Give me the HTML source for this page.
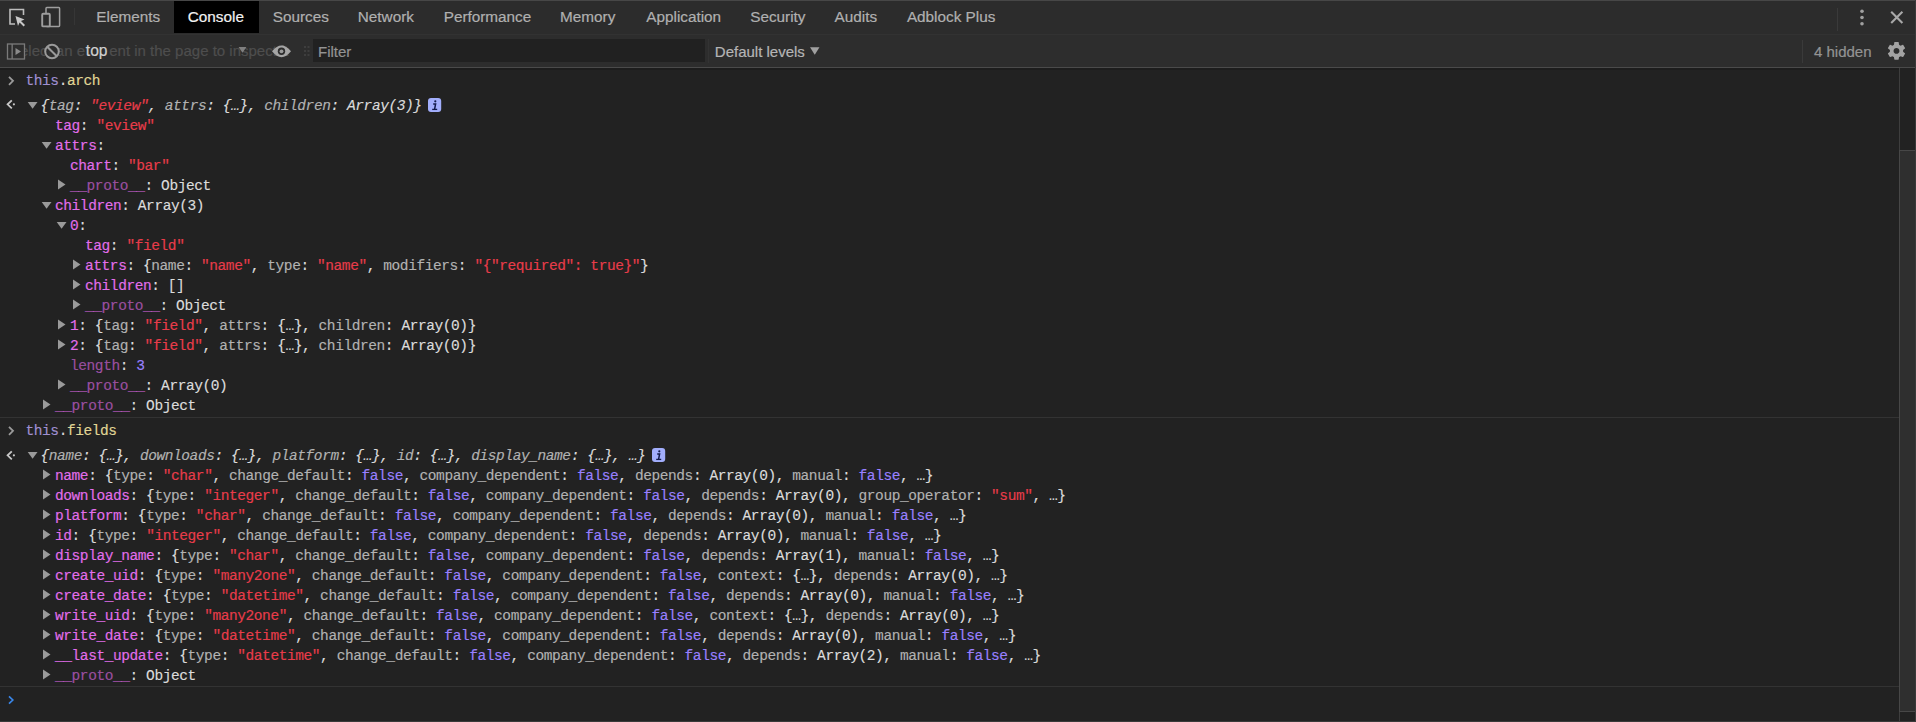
<!DOCTYPE html>
<html><head><meta charset="utf-8">
<style>
*{margin:0;padding:0;box-sizing:border-box}
html,body{width:1916px;height:722px;overflow:hidden;background:#222}
body{position:relative;font-family:"Liberation Sans",sans-serif}
.abs{position:absolute}
#topline{position:absolute;left:0;top:0;width:1916px;height:1px;background:#474747}
#tabbar{position:absolute;left:0;top:1px;width:1916px;height:34px;background:#2c2c2c;border-bottom:1px solid #323232}
#toolbar{position:absolute;left:0;top:35px;width:1916px;height:33px;background:#2d2d2d;border-bottom:1px solid #4a4a4a}
.tab{position:absolute;top:0;height:33px;line-height:33px;font-size:15.3px;color:#b0b0b0;white-space:pre;-webkit-text-stroke:0.2px currentColor}
#seltab{position:absolute;left:174px;top:1px;width:85px;height:32px;background:#000}
.tb{position:absolute;font-size:15px;white-space:pre;line-height:18px;-webkit-text-stroke:0.2px currentColor}
.row{position:absolute;font-family:"Liberation Mono",monospace;font-size:14.5px;letter-spacing:-0.42px;-webkit-text-stroke:0.15px currentColor;line-height:20px;height:20px;white-space:pre;color:#dcdcdc}
.row.it{font-style:italic}
.n{color:#e36eec}
.nd{color:rgba(227,110,236,0.6)}
.s{color:#e93c4a}
.b{color:#9980ff}
.p{color:#b2b2b2}
.tri{position:absolute;width:0;height:0}
.tri.r{border-left:7.5px solid #9a9a9a;border-top:4.75px solid transparent;border-bottom:4.75px solid transparent;margin-left:-12px;margin-top:3px}
.tri.d{border-top:7px solid #9a9a9a;border-left:4.7px solid transparent;border-right:4.7px solid transparent;margin-left:-13px;margin-top:5.67px}
.badge{position:absolute;width:14px;height:14px;border-radius:3px;background:#8f9cf6;color:#0a1a50;font-family:"Liberation Serif",serif;font-size:12px;line-height:14px;text-align:center}
.badge i{font-weight:bold}
.sep{position:absolute;left:0;width:1899px;height:1px;background:#333}
#scrolltrack{position:absolute;left:1899px;top:68px;width:17px;height:653px;background:#222;border-left:1px solid #3e3e3e;border-right:1px solid #444}
#thumb{position:absolute;left:1899px;top:150px;width:17px;height:562px;background:#2f2f2f;border:1px solid #474747}
#botline{position:absolute;left:0;top:721px;width:1916px;height:1px;background:#3a3a3a}
</style></head><body>
<div id="topline"></div>
<div id="tabbar"></div>
<div id="seltab"></div>
<!-- tab bar icons -->
<svg class="abs" style="left:0;top:0" width="80" height="34" viewBox="0 0 80 34">
  <path d="M15 24 H10 V9.5 H23.5 V15" fill="none" stroke="#bdbdbd" stroke-width="1.6"/>
  <path d="M15.5 16 L24.5 19.5 L21 21 L25 25 L23.6 26.4 L19.6 22.4 L18 26 Z" fill="#c8c8c8"/>
  <rect x="46" y="7.6" width="13.6" height="18.8" rx="0.8" fill="none" stroke="#9e9e9e" stroke-width="1.5"/>
  <rect x="42.2" y="13.8" width="7.6" height="12.6" rx="1" fill="#2c2c2c" stroke="#9e9e9e" stroke-width="1.9"/>
  <rect x="74" y="8" width="1" height="17" fill="#363636"/>
</svg>
<div class="tab" style="left:96.3px;top:0.25px">Elements</div>
<div class="tab" style="left:187.8px;top:0.25px;color:#f2f2f2">Console</div>
<div class="tab" style="left:272.8px;top:0.25px">Sources</div>
<div class="tab" style="left:357.8px;top:0.25px">Network</div>
<div class="tab" style="left:443.7px;top:0.25px">Performance</div>
<div class="tab" style="left:560.1px;top:0.25px">Memory</div>
<div class="tab" style="left:646.3px;top:0.25px">Application</div>
<div class="tab" style="left:750.2px;top:0.25px">Security</div>
<div class="tab" style="left:834.6px;top:0.25px">Audits</div>
<div class="tab" style="left:906.9px;top:0.25px">Adblock Plus</div>
<svg class="abs" style="left:1830px;top:0" width="86" height="34" viewBox="0 0 86 34">
  <rect x="7" y="8" width="1" height="23" fill="#3a3a3a"/>
  <circle cx="32" cy="11.2" r="1.8" fill="#a0a0a0"/>
  <circle cx="32" cy="17.5" r="1.8" fill="#a0a0a0"/>
  <circle cx="32" cy="23.8" r="1.8" fill="#a0a0a0"/>
  <path d="M61.2 11.7 L72.4 22.9 M72.4 11.7 L61.2 22.9" stroke="#a8a8a8" stroke-width="2.1"/>
</svg>
<div id="toolbar"></div>
<!-- toolbar -->
<div class="tb" style="left:10px;top:42.3px;color:#4e4e4e">Select an element in the page to inspect it</div>
<svg class="abs" style="left:0;top:35px" width="320" height="33" viewBox="0 0 320 33">
  <rect x="7.5" y="9" width="17" height="15" fill="#2d2d2d" stroke="#7a7a7a" stroke-width="1.3"/>
  <rect x="11.5" y="9" width="1.3" height="15" fill="#7a7a7a"/>
  <path d="M15.5 13 L21 16.5 L15.5 20 Z" fill="#8a8a8a"/>
  <circle cx="52" cy="16.5" r="6.8" fill="#2d2d2d" fill-opacity="0.8" stroke="#9a9a9a" stroke-width="2"/>
  <path d="M47.2 11.7 L56.8 21.3" stroke="#9a9a9a" stroke-width="2"/>
  <path d="M238.6 12 L246.4 12 L242.5 17.8 Z" fill="#808080"/>
  <path d="M272 16.3 Q281.5 4.6 291 16.3 Q281.5 28 272 16.3 Z" fill="#a5a5a5"/>
  <circle cx="281.5" cy="16.3" r="3.7" fill="#2d2d2d"/>
  <circle cx="281.5" cy="16.3" r="1.9" fill="#9a9a9a"/>
  <g fill="#3e3e3e"><rect x="304" y="11" width="2" height="2"/><rect x="307.5" y="11" width="2" height="2"/><rect x="304" y="15" width="2" height="2"/><rect x="307.5" y="15" width="2" height="2"/><rect x="304" y="19" width="2" height="2"/><rect x="307.5" y="19" width="2" height="2"/></g>
</svg>
<div class="tb" style="left:84.8px;top:42.3px;padding-left:1px;width:24px;height:17px;background:#2d2d2d;color:#d0d0d0;font-size:15.6px">top</div>
<div class="abs" style="left:313px;top:39px;width:392px;height:23px;background:#212121"></div>
<div class="tb" style="left:318px;top:42.8px;color:#939393">Filter</div>
<div class="abs" style="left:708px;top:39px;width:1px;height:24px;background:#333"></div>
<div class="tb" style="left:714.8px;top:42.5px;color:#b5b5b5">Default levels</div>
<svg class="abs" style="left:800px;top:35px" width="30" height="33"><path d="M810 12.3 L819.5 12.3 L814.75 19.7 Z" transform="translate(-800 0)" fill="#a0a0a0"/></svg>
<div class="abs" style="left:1802px;top:40px;width:1px;height:23px;background:#3a3a3a"></div>
<div class="tb" style="left:1814px;top:42.5px;color:#939393">4 hidden</div>
<svg class="abs" style="left:1880px;top:35px" width="36" height="33" viewBox="0 0 36 33">
  <path transform="translate(5.46 4.86) scale(0.92)" fill="#a3a3a3" fill-rule="evenodd" d="M19.14,12.94c0.04-0.3,0.06-0.61,0.06-0.94c0-0.32-0.02-0.64-0.07-0.94l2.03-1.58c0.18-0.14,0.23-0.41,0.12-0.61l-1.92-3.32c-0.12-0.22-0.37-0.29-0.59-0.22l-2.39,0.96c-0.5-0.38-1.03-0.7-1.62-0.94L14.4,2.81c-0.04-0.24-0.24-0.41-0.48-0.41h-3.84c-0.24,0-0.43,0.17-0.47,0.41L9.25,5.35C8.66,5.59,8.12,5.92,7.63,6.29L5.24,5.33c-0.22-0.08-0.47,0-0.59,0.22L2.74,8.87C2.62,9.08,2.66,9.34,2.86,9.48l2.03,1.58C4.84,11.36,4.8,11.69,4.8,12s0.02,0.64,0.07,0.94l-2.03,1.58c-0.18,0.14-0.23,0.41-0.12,0.61l1.92,3.32c0.12,0.22,0.37,0.29,0.59,0.22l2.39-0.96c0.5,0.38,1.03,0.7,1.62,0.94l0.36,2.54c0.05,0.24,0.24,0.41,0.48,0.41h3.84c0.24,0,0.44-0.17,0.47-0.41l0.36-2.54c0.59-0.24,1.13-0.56,1.62-0.94l2.39,0.96c0.22,0.08,0.47,0,0.59-0.22l1.92-3.32c0.12-0.22,0.07-0.47-0.12-0.61L19.14,12.94z M12,15.2c-1.77,0-3.2-1.43-3.2-3.2s1.43-3.2,3.2-3.2s3.2,1.43,3.2,3.2S13.77,15.2,12,15.2z"/>
</svg>
<!-- console -->
<svg class="abs" style="left:0;top:68px" width="40" height="640" viewBox="0 0 40 640">
  <path d="M9 8.8 L13 12.8 L9 16.8" fill="none" stroke="#9a9a9a" stroke-width="1.8"/>
  <path d="M11.8 32.3 L7.6 36.3 L11.8 40.3" fill="none" stroke="#c8c8c8" stroke-width="1.8"/><circle cx="13.9" cy="36.3" r="1.1" fill="#c8c8c8"/>
  <path d="M9 358.8 L13 362.8 L9 366.8" fill="none" stroke="#9a9a9a" stroke-width="1.8"/>
  <path d="M11.8 383.3 L7.6 387.3 L11.8 391.3" fill="none" stroke="#c8c8c8" stroke-width="1.8"/><circle cx="13.9" cy="387.3" r="1.1" fill="#c8c8c8"/>
  <path d="M9 628.3 L12.8 632 L9 635.7" fill="none" stroke="#3a86e8" stroke-width="1.7"/>
</svg>
<div class="row" style="top:71.4px;left:25.5px"><span style="color:#a090d2">this</span>.<span style="color:#e0d696">arch</span></div>
<div class="row" style="top:421.4px;left:25.5px"><span style="color:#a090d2">this</span>.<span style="color:#e0d696">fields</span></div>
<div class="row it" style="top:96.40px;left:40.50px">{<span class="p">tag</span>: <span class="s">"eview"</span>, <span class="p">attrs</span>: {…}, <span class="p">children</span>: Array(3)}</div>
<svg class="abs" style="left:24.50px;top:90.00px" width="20" height="20"><polygon points="2.70,12.00 12.50,12.00 7.60,18.70" fill="#9a9a9a"/></svg>
<svg class="abs" style="top:98.00px;left:428.13px" width="14" height="14" viewBox="0 0 14 14"><rect x="0" y="0" width="13.2" height="14" rx="3" fill="#a2aefc"/><circle cx="7.3" cy="3.3" r="1.1" fill="#121a4a"/><path d="M5.2 6 L7.6 6 L6.6 11.2" fill="none" stroke="#121a4a" stroke-width="1.5"/><path d="M4.2 11.4 L9.2 11.4" stroke="#121a4a" stroke-width="1.3"/></svg>
<div class="row" style="top:116.40px;left:55.00px"><span class="n">tag</span>: <span class="s">"eview"</span></div>
<div class="row" style="top:136.40px;left:55.00px"><span class="n">attrs</span>:</div>
<svg class="abs" style="left:39.00px;top:130.00px" width="20" height="20"><polygon points="2.70,12.00 12.50,12.00 7.60,18.70" fill="#9a9a9a"/></svg>
<div class="row" style="top:156.40px;left:70.00px"><span class="n">chart</span>: <span class="s">"bar"</span></div>
<div class="row" style="top:176.40px;left:70.00px"><span class="nd">__proto__</span>: Object</div>
<svg class="abs" style="left:54.00px;top:170.00px" width="20" height="20"><polygon points="4.00,9.50 11.50,14.50 4.00,19.50" fill="#9a9a9a"/></svg>
<div class="row" style="top:196.40px;left:55.00px"><span class="n">children</span>: Array(3)</div>
<svg class="abs" style="left:39.00px;top:190.00px" width="20" height="20"><polygon points="2.70,12.00 12.50,12.00 7.60,18.70" fill="#9a9a9a"/></svg>
<div class="row" style="top:216.40px;left:70.00px"><span class="n">0</span>:</div>
<svg class="abs" style="left:54.00px;top:210.00px" width="20" height="20"><polygon points="2.70,12.00 12.50,12.00 7.60,18.70" fill="#9a9a9a"/></svg>
<div class="row" style="top:236.40px;left:85.00px"><span class="n">tag</span>: <span class="s">"field"</span></div>
<div class="row" style="top:256.40px;left:85.00px"><span class="n">attrs</span>: {<span class="p">name</span>: <span class="s">"name"</span>, <span class="p">type</span>: <span class="s">"name"</span>, <span class="p">modifiers</span>: <span class="s">"{"required": true}"</span>}</div>
<svg class="abs" style="left:69.00px;top:250.00px" width="20" height="20"><polygon points="4.00,9.50 11.50,14.50 4.00,19.50" fill="#9a9a9a"/></svg>
<div class="row" style="top:276.40px;left:85.00px"><span class="n">children</span>: []</div>
<svg class="abs" style="left:69.00px;top:270.00px" width="20" height="20"><polygon points="4.00,9.50 11.50,14.50 4.00,19.50" fill="#9a9a9a"/></svg>
<div class="row" style="top:296.40px;left:85.00px"><span class="nd">__proto__</span>: Object</div>
<svg class="abs" style="left:69.00px;top:290.00px" width="20" height="20"><polygon points="4.00,9.50 11.50,14.50 4.00,19.50" fill="#9a9a9a"/></svg>
<div class="row" style="top:316.40px;left:70.00px"><span class="n">1</span>: {<span class="p">tag</span>: <span class="s">"field"</span>, <span class="p">attrs</span>: {…}, <span class="p">children</span>: Array(0)}</div>
<svg class="abs" style="left:54.00px;top:310.00px" width="20" height="20"><polygon points="4.00,9.50 11.50,14.50 4.00,19.50" fill="#9a9a9a"/></svg>
<div class="row" style="top:336.40px;left:70.00px"><span class="n">2</span>: {<span class="p">tag</span>: <span class="s">"field"</span>, <span class="p">attrs</span>: {…}, <span class="p">children</span>: Array(0)}</div>
<svg class="abs" style="left:54.00px;top:330.00px" width="20" height="20"><polygon points="4.00,9.50 11.50,14.50 4.00,19.50" fill="#9a9a9a"/></svg>
<div class="row" style="top:356.40px;left:70.00px"><span class="nd">length</span>: <span class="b">3</span></div>
<div class="row" style="top:376.40px;left:70.00px"><span class="nd">__proto__</span>: Array(0)</div>
<svg class="abs" style="left:54.00px;top:370.00px" width="20" height="20"><polygon points="4.00,9.50 11.50,14.50 4.00,19.50" fill="#9a9a9a"/></svg>
<div class="row" style="top:396.40px;left:55.00px"><span class="nd">__proto__</span>: Object</div>
<svg class="abs" style="left:39.00px;top:390.00px" width="20" height="20"><polygon points="4.00,9.50 11.50,14.50 4.00,19.50" fill="#9a9a9a"/></svg>
<div class="row it" style="top:446.40px;left:40.50px">{<span class="p">name</span>: {…}, <span class="p">downloads</span>: {…}, <span class="p">platform</span>: {…}, <span class="p">id</span>: {…}, <span class="p">display_name</span>: {…}, …}</div>
<svg class="abs" style="left:24.50px;top:440.00px" width="20" height="20"><polygon points="2.70,12.00 12.50,12.00 7.60,18.70" fill="#9a9a9a"/></svg>
<svg class="abs" style="top:448.00px;left:651.67px" width="14" height="14" viewBox="0 0 14 14"><rect x="0" y="0" width="13.2" height="14" rx="3" fill="#a2aefc"/><circle cx="7.3" cy="3.3" r="1.1" fill="#121a4a"/><path d="M5.2 6 L7.6 6 L6.6 11.2" fill="none" stroke="#121a4a" stroke-width="1.5"/><path d="M4.2 11.4 L9.2 11.4" stroke="#121a4a" stroke-width="1.3"/></svg>
<div class="row" style="top:466.40px;left:55.00px"><span class="n">name</span>: {<span class="p">type</span>: <span class="s">"char"</span>, <span class="p">change_default</span>: <span class="b">false</span>, <span class="p">company_dependent</span>: <span class="b">false</span>, <span class="p">depends</span>: Array(0), <span class="p">manual</span>: <span class="b">false</span>, …}</div>
<svg class="abs" style="left:39.00px;top:460.00px" width="20" height="20"><polygon points="4.00,9.50 11.50,14.50 4.00,19.50" fill="#9a9a9a"/></svg>
<div class="row" style="top:486.40px;left:55.00px"><span class="n">downloads</span>: {<span class="p">type</span>: <span class="s">"integer"</span>, <span class="p">change_default</span>: <span class="b">false</span>, <span class="p">company_dependent</span>: <span class="b">false</span>, <span class="p">depends</span>: Array(0), <span class="p">group_operator</span>: <span class="s">"sum"</span>, …}</div>
<svg class="abs" style="left:39.00px;top:480.00px" width="20" height="20"><polygon points="4.00,9.50 11.50,14.50 4.00,19.50" fill="#9a9a9a"/></svg>
<div class="row" style="top:506.40px;left:55.00px"><span class="n">platform</span>: {<span class="p">type</span>: <span class="s">"char"</span>, <span class="p">change_default</span>: <span class="b">false</span>, <span class="p">company_dependent</span>: <span class="b">false</span>, <span class="p">depends</span>: Array(0), <span class="p">manual</span>: <span class="b">false</span>, …}</div>
<svg class="abs" style="left:39.00px;top:500.00px" width="20" height="20"><polygon points="4.00,9.50 11.50,14.50 4.00,19.50" fill="#9a9a9a"/></svg>
<div class="row" style="top:526.40px;left:55.00px"><span class="n">id</span>: {<span class="p">type</span>: <span class="s">"integer"</span>, <span class="p">change_default</span>: <span class="b">false</span>, <span class="p">company_dependent</span>: <span class="b">false</span>, <span class="p">depends</span>: Array(0), <span class="p">manual</span>: <span class="b">false</span>, …}</div>
<svg class="abs" style="left:39.00px;top:520.00px" width="20" height="20"><polygon points="4.00,9.50 11.50,14.50 4.00,19.50" fill="#9a9a9a"/></svg>
<div class="row" style="top:546.40px;left:55.00px"><span class="n">display_name</span>: {<span class="p">type</span>: <span class="s">"char"</span>, <span class="p">change_default</span>: <span class="b">false</span>, <span class="p">company_dependent</span>: <span class="b">false</span>, <span class="p">depends</span>: Array(1), <span class="p">manual</span>: <span class="b">false</span>, …}</div>
<svg class="abs" style="left:39.00px;top:540.00px" width="20" height="20"><polygon points="4.00,9.50 11.50,14.50 4.00,19.50" fill="#9a9a9a"/></svg>
<div class="row" style="top:566.40px;left:55.00px"><span class="n">create_uid</span>: {<span class="p">type</span>: <span class="s">"many2one"</span>, <span class="p">change_default</span>: <span class="b">false</span>, <span class="p">company_dependent</span>: <span class="b">false</span>, <span class="p">context</span>: {…}, <span class="p">depends</span>: Array(0), …}</div>
<svg class="abs" style="left:39.00px;top:560.00px" width="20" height="20"><polygon points="4.00,9.50 11.50,14.50 4.00,19.50" fill="#9a9a9a"/></svg>
<div class="row" style="top:586.40px;left:55.00px"><span class="n">create_date</span>: {<span class="p">type</span>: <span class="s">"datetime"</span>, <span class="p">change_default</span>: <span class="b">false</span>, <span class="p">company_dependent</span>: <span class="b">false</span>, <span class="p">depends</span>: Array(0), <span class="p">manual</span>: <span class="b">false</span>, …}</div>
<svg class="abs" style="left:39.00px;top:580.00px" width="20" height="20"><polygon points="4.00,9.50 11.50,14.50 4.00,19.50" fill="#9a9a9a"/></svg>
<div class="row" style="top:606.40px;left:55.00px"><span class="n">write_uid</span>: {<span class="p">type</span>: <span class="s">"many2one"</span>, <span class="p">change_default</span>: <span class="b">false</span>, <span class="p">company_dependent</span>: <span class="b">false</span>, <span class="p">context</span>: {…}, <span class="p">depends</span>: Array(0), …}</div>
<svg class="abs" style="left:39.00px;top:600.00px" width="20" height="20"><polygon points="4.00,9.50 11.50,14.50 4.00,19.50" fill="#9a9a9a"/></svg>
<div class="row" style="top:626.40px;left:55.00px"><span class="n">write_date</span>: {<span class="p">type</span>: <span class="s">"datetime"</span>, <span class="p">change_default</span>: <span class="b">false</span>, <span class="p">company_dependent</span>: <span class="b">false</span>, <span class="p">depends</span>: Array(0), <span class="p">manual</span>: <span class="b">false</span>, …}</div>
<svg class="abs" style="left:39.00px;top:620.00px" width="20" height="20"><polygon points="4.00,9.50 11.50,14.50 4.00,19.50" fill="#9a9a9a"/></svg>
<div class="row" style="top:646.40px;left:55.00px"><span class="n">__last_update</span>: {<span class="p">type</span>: <span class="s">"datetime"</span>, <span class="p">change_default</span>: <span class="b">false</span>, <span class="p">company_dependent</span>: <span class="b">false</span>, <span class="p">depends</span>: Array(2), <span class="p">manual</span>: <span class="b">false</span>, …}</div>
<svg class="abs" style="left:39.00px;top:640.00px" width="20" height="20"><polygon points="4.00,9.50 11.50,14.50 4.00,19.50" fill="#9a9a9a"/></svg>
<div class="row" style="top:666.40px;left:55.00px"><span class="nd">__proto__</span>: Object</div>
<svg class="abs" style="left:39.00px;top:660.00px" width="20" height="20"><polygon points="4.00,9.50 11.50,14.50 4.00,19.50" fill="#9a9a9a"/></svg>
<div class="abs" style="left:0;top:68px;width:1916px;height:2px;background:#1d1d1d"></div>
<div class="sep" style="top:417px"></div>
<div class="sep" style="top:686px"></div>
<div id="scrolltrack"></div>
<div id="thumb"></div>
<div id="botline"></div>
<div class="abs" style="left:1915px;top:0;width:1px;height:722px;background:#3a3a3a"></div>
</body></html>
